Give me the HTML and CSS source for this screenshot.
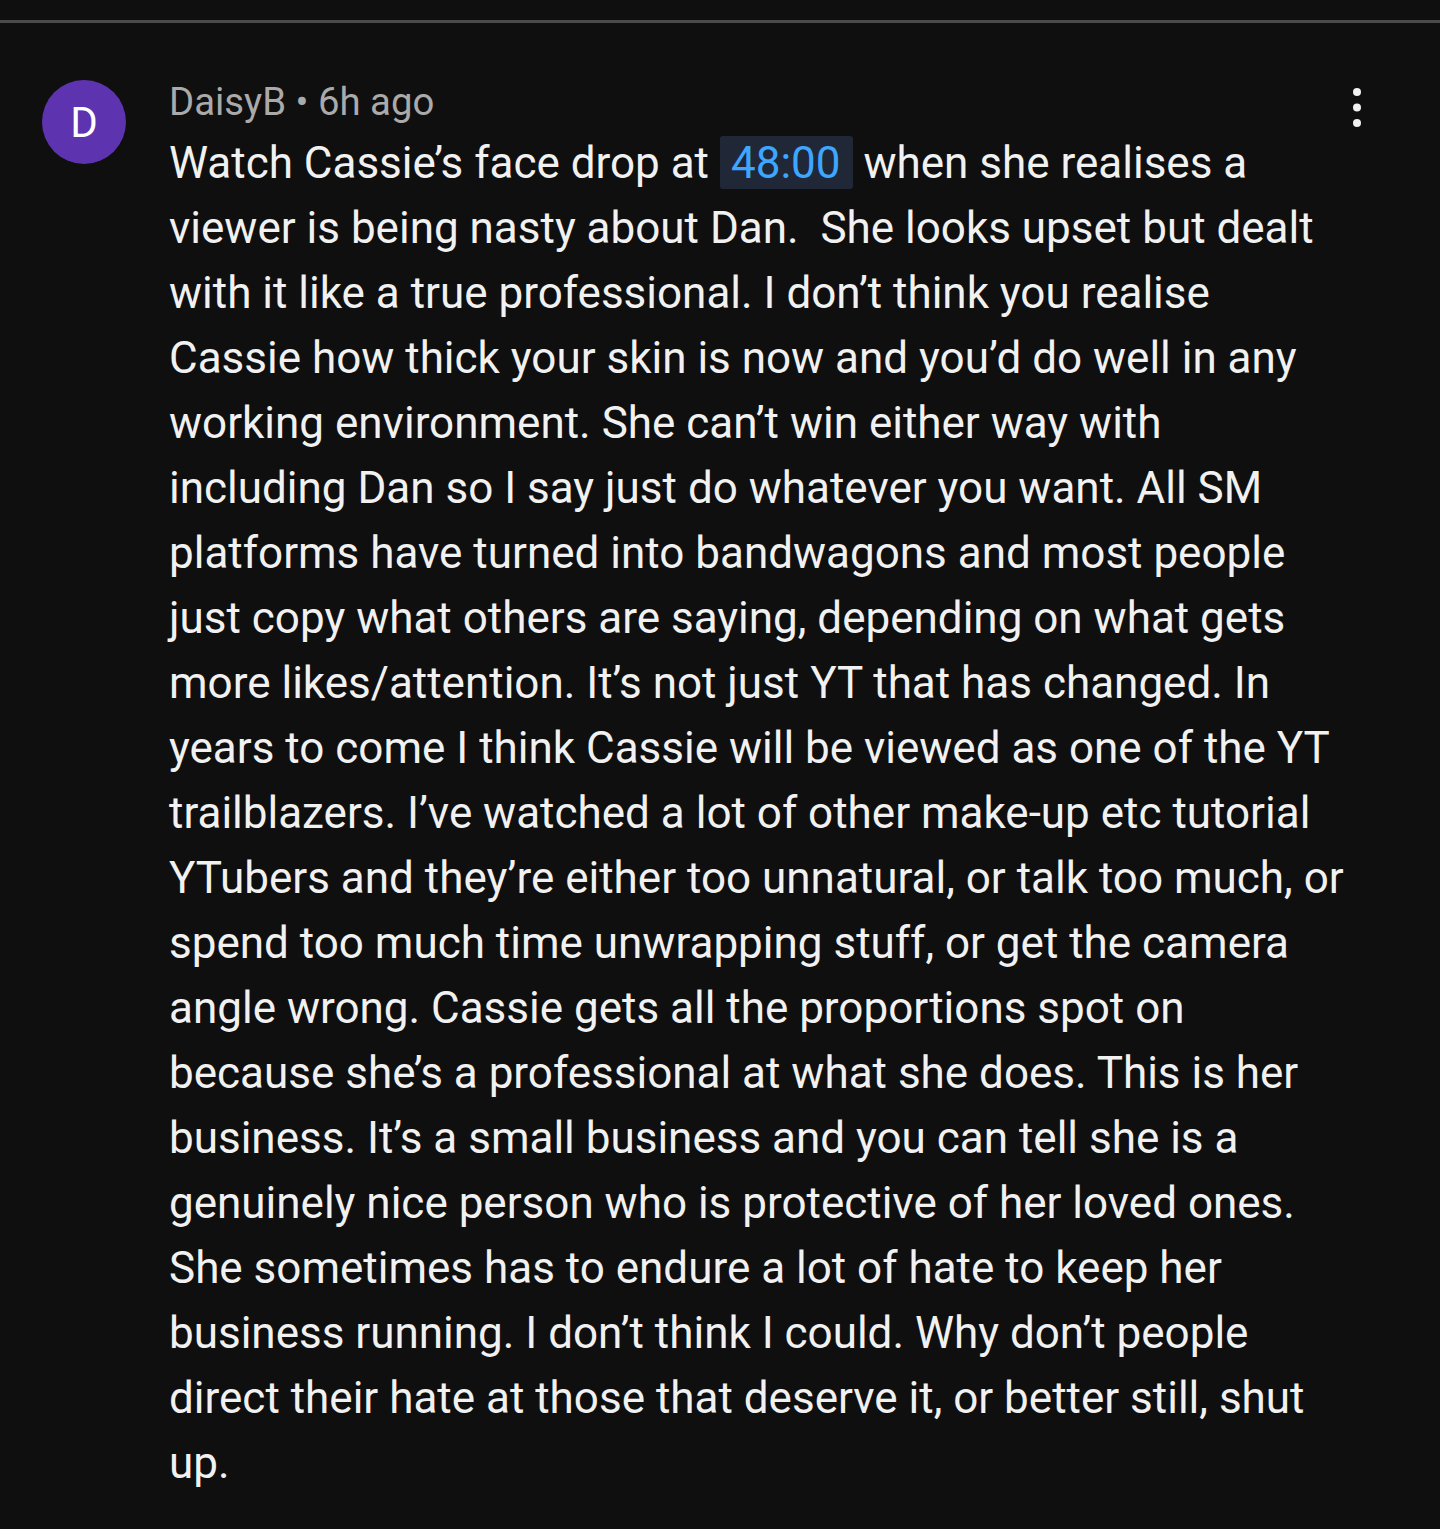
FILE: index.html
```html
<!DOCTYPE html>
<html lang="en">
	<head>
		<meta charset="UTF-8">
		<title>Comment</title>
		<link rel="stylesheet" href="styles.css">
	</head>
	<body>
		<hr class="topline">
		<div class="comment">
			<div class="avatar">D</div>
			<div class="content">
				<div class="meta">DaisyB • 6h ago</div>
				<p class="text">Watch Cassie’s face drop at <span class="stamp">48:00</span> when she realises a viewer is being nasty about Dan.&nbsp; She looks upset but dealt with it like a true professional. I don’t think you realise Cassie how thick your skin is now and you’d do well in any working environment. She can’t win either way with including Dan so I say just do whatever you want. All SM platforms have turned into bandwagons and most people just copy what others are saying, depending on what gets more likes/attention. It’s not just YT that has changed. In years to come I think Cassie will be viewed as one of the YT trailblazers. I’ve watched a lot of other make-up etc tutorial YTubers and they’re either too unnatural, or talk too much, or spend too much time unwrapping stuff, or get the camera angle wrong. Cassie gets all the proportions spot on because she’s a professional at what she does. This is her business. It’s a small business and you can tell she is a genuinely nice person who is protective of her loved ones. She sometimes has to endure a lot of hate to keep her business running. I don’t think I could. Why don’t people direct their hate at those that deserve it, or better still, shut up.</p>
			</div>
			<button class="menu" aria-label="More">
				<svg width="10" height="42" viewBox="0 0 10 42">
					<circle cx="5" cy="5" r="4" fill="#f1f1f1"/>
					<circle cx="5" cy="20.5" r="4" fill="#f1f1f1"/>
					<circle cx="5" cy="36" r="4" fill="#f1f1f1"/>
				</svg>
			</button>
		</div>
	</body>
</html>
```

FILE: styles.css
```css
body {
	margin: 0;
	background-color: #0f0f0f;
	font-family: Roboto, "Liberation Sans", sans-serif;
	color: #f1f1f1;
	height: 1529px;
}
.topline {
	margin: 0;
	margin-top: 20px;
	border: none;
	border-top: 3px solid #4a4a4a;
}
.comment {
	display: flex;
	align-items: flex-start;
	padding: 57px 0 0 42px;
}
.avatar {
	flex: none;
	width: 84px;
	height: 84px;
	border-radius: 50%;
	background-color: #5e33b0;
	color: #fff;
	font-size: 42px;
	display: flex;
	align-items: center;
	justify-content: center;
}
.content {
	flex: none;
	margin-left: 43px;
	width: 1176px;
}
.meta {
	font-size: 38.3px;
	line-height: 44px;
	color: #aaaaaa;
}
.text {
	margin: 7px 0 0 0;
	font-size: 44px;
	line-height: 65px;
	color: #f1f1f1;
}
.stamp {
	background-color: #202838;
	color: #3ea6ff;
	padding: 1px 12px 0 11px;
	border-radius: 3px;
}
.menu {
	flex: none;
	background: none;
	border: none;
	padding: 0;
	margin: 7px 0 0 0;
	margin-left: auto;
	margin-right: 78px;
	width: 10px;
	display: flex;
}
```
